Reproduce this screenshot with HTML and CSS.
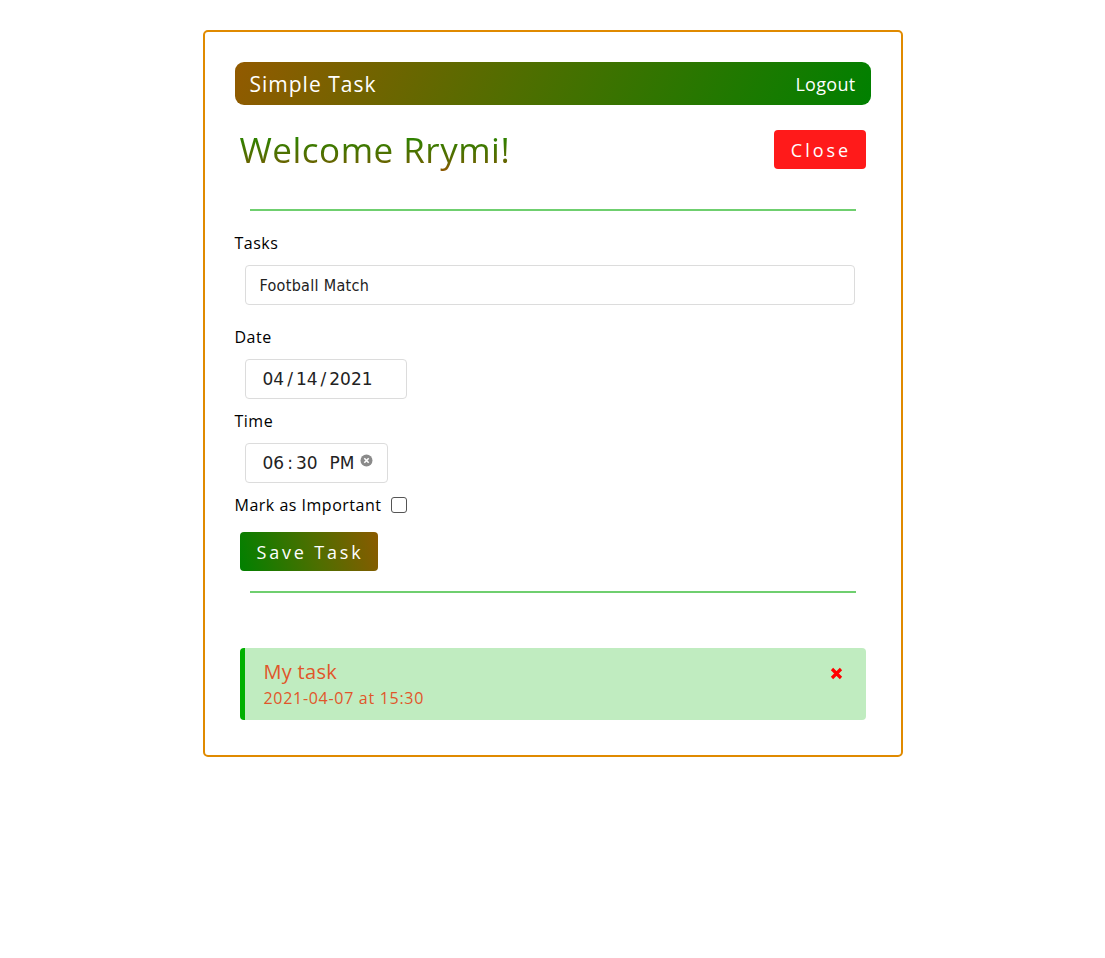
FILE: index.html
```html
<!DOCTYPE html>
<html>
<head>
<meta charset="utf-8">
<link rel="stylesheet" href="styles.css">
</head>
<body>
<div class="card">
  <header class="topbar">
    <span class="brand">Simple Task</span>
    <span class="logout">Logout</span>
  </header>
  <div class="welcome-row">
    <h1 class="welcome">Welcome Rrymi!</h1>
    <button class="btn-close">Close</button>
  </div>
  <hr class="divider">
  <form class="task-form">
    <label class="field-label">Tasks</label>
    <div class="input wide">Football Match</div>
    <label class="field-label">Date</label>
    <div class="input date"><span>04</span><span class="sep">/</span><span>14</span><span class="sep">/</span><span>2021</span></div>
    <label class="field-label">Time</label>
    <div class="input time"><span>06</span><span class="sep">:</span><span>30</span><span class="ampm">PM</span>
      <svg class="clear" width="13" height="13" viewBox="0 0 13 13"><circle cx="6.5" cy="6.5" r="6" fill="#8a8a8a"/><path d="M4.3 4.3l4.4 4.4M8.7 4.3l-4.4 4.4" stroke="#fff" stroke-width="1.6"/></svg>
    </div>
    <div class="check-row">
      <span class="field-label inline">Mark as Important</span>
      <span class="checkbox"></span>
    </div>
    <button type="button" class="btn-save">Save Task</button>
  </form>
  <hr class="divider second">
  <div class="task">
    <div class="task-text">
      <div class="task-title">My task</div>
      <div class="task-date">2021-04-07 at 15:30</div>
    </div>
    <svg class="task-x" width="13" height="13" viewBox="0 0 13 13"><path d="M2 2l9 9M11 2L2 11" stroke="#ff0000" stroke-width="3.2"/></svg>
  </div>
</div>
</body>
</html>
```

FILE: styles.css
```css
* { box-sizing: border-box; }
body {
  margin: 0;
  background: #fff;
  font-family: "Open Sans", "Noto Sans", sans-serif;
  color: #000;
}
.card {
  width: 700px;
  margin: 30px auto 0;
  border: 2px solid #e08a00;
  border-radius: 5px;
  padding: 30px 30px 35px;
}
.topbar {
  height: 43px;
  border-radius: 9px;
  background: linear-gradient(115deg, #925a00 0%, #4f6e00 45%, #008000 100%);
  display: flex;
  align-items: center;
  justify-content: space-between;
  padding: 0 15px;
  color: #fff;
}
.brand { font-size: 21px; letter-spacing: 1px; }
.logout { font-size: 18px; letter-spacing: 0.3px; }
.welcome-row {
  display: flex;
  justify-content: space-between;
  align-items: center;
  margin: 25px 5px 0;
  height: 39px;
}
.welcome {
  margin: 0;
  font-size: 35px;
  font-weight: 400;
  letter-spacing: 0.5px;
  background: linear-gradient(to bottom, #2e8200 25%, #5a6a00 70%, #955500 100%);
  -webkit-background-clip: text;
  background-clip: text;
  color: transparent;
}
.btn-close {
  height: 39px;
  width: 92px;
  border: none;
  border-radius: 4px;
  background: #ff1a1a;
  color: #fff;
  font-family: inherit;
  font-size: 18px;
  letter-spacing: 3px;
  padding: 0 0 0 3px;
}
.divider {
  margin: 40px 15px 0;
  border: none;
  height: 2px;
  background: #6fcf6f;
}
.divider.second { margin-top: 20px; }
.task-form {
  display: flex;
  flex-direction: column;
  align-items: flex-start;
  padding-top: 21px;
}
.field-label {
  font-size: 16px;
  letter-spacing: 0.5px;
  line-height: 22px;
  height: 22px;
}
.input {
  margin: 11px 0 0 10px;
  height: 40px;
  border: 1px solid #dcdcdc;
  border-radius: 4px;
  display: flex;
  align-items: center;
  color: #222;
}
.input.wide {
  width: 610px;
  padding-left: 14px;
  font-family: "DejaVu Sans Condensed", "DejaVu Sans", sans-serif;
  font-size: 16px;
  letter-spacing: 0.3px;
  margin-bottom: 21px;
}
.input.date, .input.time {
  font-family: "DejaVu Sans", sans-serif;
  font-size: 17px;
  padding-left: 17px;
  margin-bottom: 11px;
}
.input.date { width: 162px; }
.input.time { width: 143px; }
.sep { margin: 0 3px; }
.ampm { margin-left: 12px; }
.clear { margin-left: 6px; margin-top: -5px; }
.check-row {
  display: flex;
  align-items: center;
  gap: 10px;
  height: 22px;
}
.checkbox {
  width: 16px;
  height: 16px;
  border: 1px solid #555;
  border-radius: 3px;
  background: #fff;
}
.btn-save {
  margin: 16px 0 0 5px;
  height: 39px;
  width: 138px;
  border: none;
  border-radius: 4px;
  background: linear-gradient(75deg, #008000 0%, #4f6e00 55%, #8a5a00 100%);
  color: #fff;
  font-family: inherit;
  font-size: 18px;
  letter-spacing: 2.8px;
  padding: 0 0 0 3px;
}
.task {
  margin: 55px 5px 0;
  height: 72px;
  background: #c0ecc0;
  border-left: 5px solid #00b000;
  border-radius: 4px;
  display: flex;
  justify-content: space-between;
  align-items: flex-start;
  padding: 10px 23px 0 19px;
  color: #e0562a;
}
.task-title { font-size: 20px; letter-spacing: 0.3px; line-height: 28px; }
.task-date { font-size: 16px; letter-spacing: 0.7px; line-height: 24px; }
.task-x { margin-top: 9px; }
```
